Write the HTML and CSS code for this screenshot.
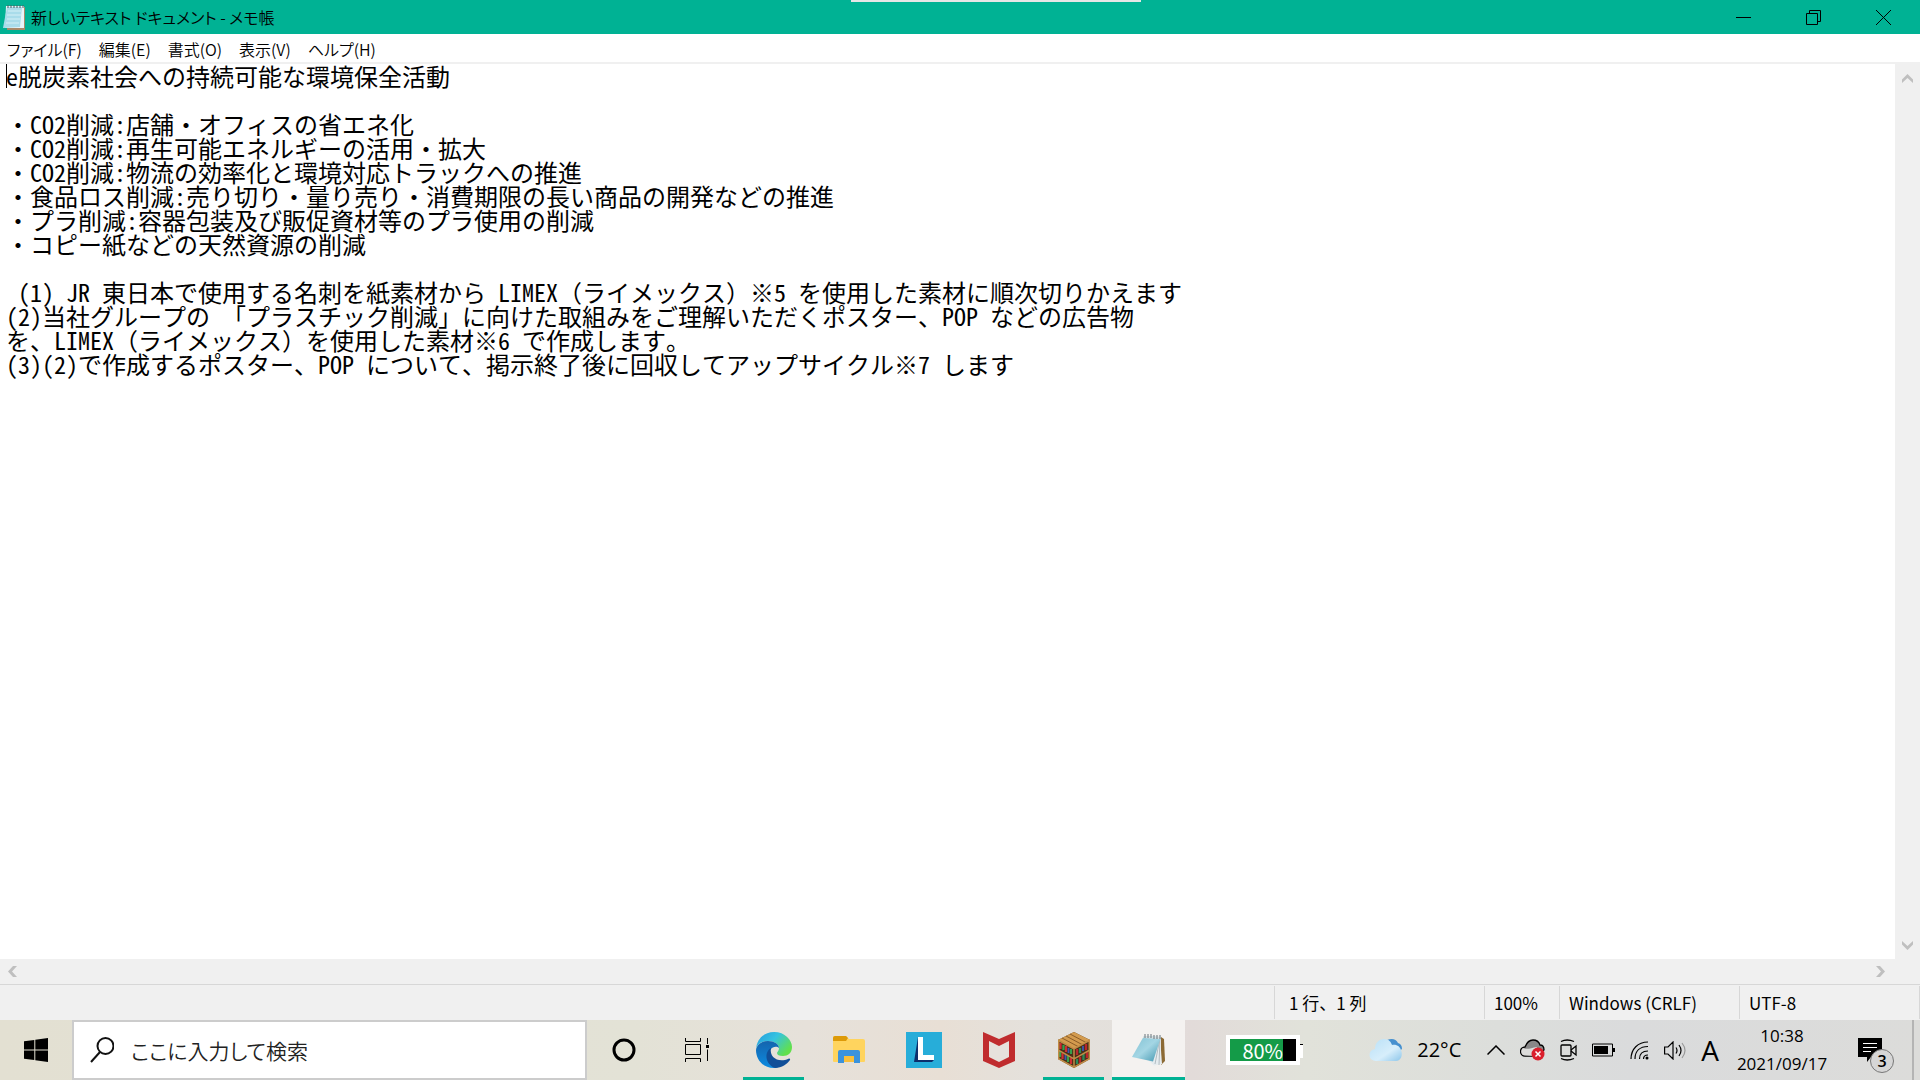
FILE: index.html
```html
<!DOCTYPE html>
<html lang="ja">
<head>
<meta charset="utf-8">
<title>新しいテキスト ドキュメント - メモ帳</title>
<link rel="stylesheet" href="styles.css">
</head>
<body>
<main class="window">
  <header class="titlebar">
    <svg class="app-icon" viewBox="0 0 24 26" aria-hidden="true">
      <path d="M4 3h18v23H4z" fill="#a98a6a"/>
      <path d="M3 2h18v22H2z" fill="#e8f4f8"/>
      <path d="M4 3h15L17 23 0 24z" fill="#a9dcea"/>
      <path d="M5 7h13M4 11h14M4 15h13M3 19h13" stroke="#d5f0f6" stroke-width="1"/>
      <path d="M5 1v3M8 1v3M11 1v3M14 1v3M17 1v3M20 1v3" stroke="#4c5a60" stroke-width="1"/>
    </svg>
    <h1 class="title">新しいテキスト ドキュメント - メモ帳</h1>
    <span class="grip"></span>
    <div class="window-buttons">
      <button type="button" aria-label="最小化"><svg viewBox="0 0 15 15"><path d="M0 7.5h15" /></svg></button>
      <button type="button" aria-label="元に戻す"><svg viewBox="0 0 15 15"><path d="M.5 3.5h11v11H.5zM3.5 3.500V.5h11v11h-3" /></svg></button>
      <button type="button" aria-label="閉じる"><svg viewBox="0 0 15 15"><path d="M0 0l15 15M15 0L0 15" /></svg></button>
    </div>
  </header>
  <nav class="menubar">
    <button type="button">ファイル(F)</button>
    <button type="button">編集(E)</button>
    <button type="button">書式(O)</button>
    <button type="button">表示(V)</button>
    <button type="button">ヘルプ(H)</button>
  </nav>
  <div class="editor">
    <div class="page">
      <textarea class="text" wrap="off" spellcheck="false" aria-label="本文">e脱炭素社会への持続可能な環境保全活動

・CO2削減:店舗・オフィスの省エネ化
・CO2削減:再生可能エネルギーの活用・拡大
・CO2削減:物流の効率化と環境対応トラックへの推進
・食品ロス削減:売り切り・量り売り・消費期限の長い商品の開発などの推進
・プラ削減:容器包装及び販促資材等のプラ使用の削減
・コピー紙などの天然資源の削減

 (1) JR 東日本で使用する名刺を紙素材から LIMEX（ライメックス）※5 を使用した素材に順次切りかえます
(2)当社グループの 「プラスチック削減」に向けた取組みをご理解いただくポスター、POP などの広告物
を、LIMEX（ライメックス）を使用した素材※6 で作成します。
(3)(2)で作成するポスター、POP について、掲示終了後に回収してアップサイクル※7 します</textarea>
      <span class="caret"></span>
    </div>
    <div class="scroll scroll-v">
      <button type="button" aria-label="上へ"><svg viewBox="0 0 11 9"><path d="M0 9V5.500L5.500 0 11 5.500V9L5.500 4z"/></svg></button>
      <button type="button" aria-label="下へ"><svg viewBox="0 0 11 9"><path d="M0 0v3.500L5.500 9 11 3.500V0L5.500 5z"/></svg></button>
    </div>
    <div class="scroll scroll-h">
      <button type="button" aria-label="左へ"><svg viewBox="0 0 9 11"><path d="M9 0H5L0 5.500 5 11h4L4 5.500z"/></svg></button>
      <button type="button" aria-label="右へ"><svg viewBox="0 0 9 11"><path d="M0 0h4l5 5.500L4 11H0l5-5.500z"/></svg></button>
    </div>
  </div>
  <footer class="status">
    <span class="cell cell-pos">1 行、1 列</span>
    <span class="cell cell-zoom">100%</span>
    <span class="cell cell-eol">Windows (CRLF)</span>
    <span class="cell cell-enc">UTF-8</span>
  </footer>
</main>

<section class="taskbar" aria-label="タスク バー">
  <button type="button" class="task start" aria-label="スタート">
    <svg width="24" height="24" viewBox="0 0 24 24"><path d="M0 3.300L10.300 2v9.400H0zM11.300 1.800L24 0v11.400H11.300zM0 12.400h10.300V22L0 20.700zM11.300 12.400H24V24l-12.700-1.800z"/></svg>
  </button>
  <label class="search">
    <svg width="24" height="26" viewBox="0 0 24 26" fill="none" stroke="#111" stroke-width="2"><circle cx="15.500" cy="9" r="8"/><path d="M10 15L1 25"/></svg>
    <input type="text" placeholder="ここに入力して検索" aria-label="検索">
  </label>
  <button type="button" class="task" aria-label="Cortana">
    <svg width="24" height="24" viewBox="0 0 24 24" fill="none" stroke="#000" stroke-width="3"><circle cx="12" cy="12" r="10"/></svg>
  </button>
  <button type="button" class="task" aria-label="タスク ビュー">
    <svg width="24" height="24" viewBox="0 0 24 24" fill="none" stroke="#000"><path d="M.5 0v3.500h15V0M.5 6.500h15v10H.5zM.5 24v-3.500h15V24M22.500 0v6M22.500 11.500V23"/><path d="M21 7h3v3h-3z" fill="#000" stroke="none"/></svg>
  </button>
  <div class="apps">
    <button type="button" class="task running" aria-label="Microsoft Edge">
      <svg width="36" height="36" viewBox="0 0 36 36">
        <defs>
          <linearGradient id="edge-top" x1="0" y1="0" x2="1" y2=".6"><stop offset="0" stop-color="#249ade"/><stop offset=".5" stop-color="#35c3e0"/><stop offset="1" stop-color="#62e04c"/></linearGradient>
          <linearGradient id="edge-left" x1="0" y1="0" x2="0" y2="1"><stop offset="0" stop-color="#1464ad"/><stop offset="1" stop-color="#0d8be0"/></linearGradient>
        </defs>
        <path d="M0 17C1 7 8 0 18 0c11 0 18 8 18 15 0 6-4 9-9 9-4 0-6-1-6-3 0-1 2-2 2-5 0-4-5-7-11-7C6 9 1 12 0 17z" fill="url(#edge-top)"/>
        <path d="M0 18C1 12 6 9 12 9c6 0 11 3 11 7-2-2-6-2-9 2-4 6 0 14 8 17.500C9 38 0 29 0 18z" fill="url(#edge-left)"/>
        <path d="M15 16c-7 4-6 16 4 20 7 0 12-4 15-8 .5-1-.3-2-1.500-1.300C23 31 13 26 15 16z" fill="#114f98"/>
      </svg>
    </button>
    <button type="button" class="task" aria-label="エクスプローラー">
      <svg width="32" height="28" viewBox="0 0 32 28"><path d="M0 2q0-2 2-2h11l3 3h14q2 0 2 2v20q0 1-1 1H1q-1 0-1-1z" fill="#ffd45e"/><path d="M0 2q0-2 2-2h11l2 2-2 3H0z" fill="#dd9a08"/><path d="M5 27V16q0-2 2-2h18q2 0 2 2v11h-6v-7H11v7z" fill="#3b93dd"/><path d="M11 20h10v6H11z" fill="#f9bf3b"/></svg>
    </button>
    <button type="button" class="task" aria-label="Lenovo">
      <svg width="36" height="36" viewBox="0 0 36 36"><path d="M0 0h36v36H0z" fill="#27add9"/><path d="M12 5L8 30h18l2-2-16-1z" fill="#0c2f6c"/><path d="M12 5h5v18h11v5H12z" fill="#fff"/></svg>
    </button>
    <button type="button" class="task" aria-label="McAfee">
      <svg width="32" height="36" viewBox="0 0 32 36"><path d="M0 0l16 7L32 0v29l-16 7-16-7z" fill="#c02c2e"/><path d="M6 9l10 5 10-5v16l-10 5-10-5z" fill="#e6e1dc"/></svg>
    </button>
    <button type="button" class="task running" aria-label="Minecraft">
      <svg width="32" height="36" viewBox="0 0 32 36">
        <path d="M16 0l16 8v19l-16 9L0 27V8z" fill="#4a3018"/>
        <path d="M16 0l16 8-16 9L0 8z" fill="#d39b4e"/>
        <path d="M12 2l16 8.500M8 4l16 8.500M4 6l16 8.500" stroke="#8a5c28" stroke-width="1"/>
        <path d="M2.500 11v6M8 14v6M4.500 21v6M13 26v6" stroke="#cf2d32" stroke-width="2.200"/>
        <path d="M5.500 13v5M13 17v5M2 19v6M10 24v6" stroke="#35a04c" stroke-width="2.200"/>
        <path d="M19 17v6M28 12v6M22 25v6M29 20v6" stroke="#b8262c" stroke-width="2.200"/>
        <path d="M22 16v5M19 27v5M25.500 22v6" stroke="#2b8a5a" stroke-width="2.200"/>
        <path d="M10.500 16v5M25 14v5M7.500 22v6" stroke="#3c56b0" stroke-width="1.800"/>
        <path d="M.7 8.500l15.300 8.500 15.300-8.500v18.200L16 35.200.7 26.700zM0 18l16 9 16-9M16 17v18" fill="none" stroke="#c08c46" stroke-width="1.500"/>
      </svg>
    </button>
    <button type="button" class="task running active" aria-label="メモ帳">
      <svg width="34" height="32" viewBox="0 0 34 32">
        <defs><linearGradient id="pad" x1="0" y1="0" x2="1" y2="1"><stop offset="0" stop-color="#7fc0d3"/><stop offset=".5" stop-color="#a4d6e4"/><stop offset="1" stop-color="#3d93ad"/></linearGradient></defs>
        <path d="M29 3l3 2 1 22-4 4z" fill="#8c6a34"/>
        <path d="M28 3l2 27-8 1.500L17 27z" fill="#e6ecef"/>
        <path d="M28 4l-5 26M28 4l-1 27" stroke="#a3afb5" stroke-width=".8"/>
        <path d="M12 2l17 1-8 24.500L0 23z" fill="url(#pad)"/>
        <path d="M12 2l17 1-1 2-17-1z" fill="#d9dfe1"/>
        <path d="M13 0v4M16 0v4M19 0v4M22 1v4M25 1v4M28 1v4" stroke="#69747a" stroke-width="1"/>
      </svg>
    </button>
  </div>
  <div class="meter" role="img" aria-label="バッテリー残量"><span class="meter-text">80%</span></div>
  <button type="button" class="weather">
    <svg width="34" height="24" viewBox="0 0 34 24">
      <defs><linearGradient id="sky" x1="0" y1="0" x2="1" y2="1"><stop offset="0" stop-color="#b9e0f7"/><stop offset=".6" stop-color="#d7eefb"/><stop offset="1" stop-color="#8dc6ea"/></linearGradient></defs>
      <path d="M18 2q8-3 11 3 4 1 4 6l-4 3z" fill="#4690cf"/>
      <path d="M7 23a6 6 0 0 1-1-12C6 4 11 1 15 1c5 0 7 3 8 6 5-1 8 2 9 5 2 5 0 11-5 11z" fill="url(#sky)"/>
    </svg>
    <span>22°C</span>
  </button>
  <div class="tray">
    <button type="button" aria-label="隠れているインジケーター"><svg width="18" height="10" viewBox="0 0 18 10" fill="none" stroke="#000" stroke-width="1.500"><path d="M.5 9.500L9 1l8.500 8.500"/></svg></button>
    <button type="button" aria-label="OneDrive"><svg width="25" height="22" viewBox="0 0 25 22"><path d="M5 17a4.500 4.500 0 0 1 0-9C7 3 10 1 13 1c4 0 6 2 7 5 3 0 4 2 4 5L15 17z" fill="#888" stroke="#000" stroke-width="1.300"/><path d="M5 16.500c-4 0-5-5-2-7.500 4 2 8 0 14-1l-2 9z" fill="#dcdcda"/><circle cx="18" cy="15" r="6.500" fill="#da1f2c"/><path d="M15.500 12.500l5 5M20.500 12.500l-5 5" stroke="#fff" stroke-width="1.500"/></svg></button>
    <button type="button" aria-label="ビデオ会議"><svg width="17" height="22" viewBox="0 0 17 22" fill="none" stroke="#000" stroke-width="1.300"><rect x="1" y="6" width="10" height="11" rx="1"/><path d="M11 11l5-4v9l-5-4M1 2.500q6-3 13 0M1 19.500q6 3 13 0"/></svg></button>
    <button type="button" aria-label="電源"><svg width="23" height="14" viewBox="0 0 23 14"><path d="M.5 1h20v12H.5z" fill="none" stroke="#000"/><path d="M2 3h14v8H2zM21 5h2v4h-2z"/></svg></button>
    <button type="button" aria-label="ネットワーク"><svg width="19" height="19" viewBox="0 0 19 19" fill="none" stroke="#000" stroke-width="1.200"><path d="M1 18C1 8 8 1 18 1M5 18C5 10 10 5.500 18 5.500M9.500 18c0-5 3-8 8.500-8M13.500 18c0-2.500 1.500-4 4.500-4" /><circle cx="17" cy="17" r="1.500" fill="#000" stroke="none"/></svg></button>
    <button type="button" aria-label="音量"><svg width="22" height="19" viewBox="0 0 22 19" fill="none" stroke="#000" stroke-width="1.200"><path d="M.6 6h3.400l5-5v17l-5-5H.6zM12 6.500q2 3 0 6M15 4q4 5.500 0 11"/><path d="M18 2q6 7.500 0 15" stroke="#999"/></svg></button>
    <button type="button" class="ime">A</button>
  </div>
  <button type="button" class="clock"><span>10:38</span><span>2021/09/17</span></button>
  <button type="button" class="notice" aria-label="通知 3">
    <svg width="24" height="24" viewBox="0 0 24 24"><path d="M0 0h24v19H13l-4 5v-5H0z"/><path d="M5 5.500h14M5 9.500h14M5 13.500h8" stroke="#fff"/></svg>
    <span class="badge">3</span>
  </button>
  <button type="button" class="peek" aria-label="デスクトップの表示"></button>
</section>
</body>
</html>
```
FILE: styles.css
```css
* { box-sizing: border-box; }

body {
  margin: 0;
  min-height: 100vh;
  display: flex;
  flex-direction: column;
  background: #fff;
  color: #000;
  font-family: "Noto Sans CJK JP", sans-serif;
  font-size: 17px;
  font-feature-settings: "palt";
}

button {
  margin: 0;
  padding: 0;
  border: 0;
  background: none;
  color: inherit;
  font: inherit;
  font-feature-settings: inherit;
}

svg { display: block; flex: none; }

.window { flex: 1; display: flex; flex-direction: column; }

.titlebar {
  position: relative;
  height: 34px;
  display: flex;
  align-items: center;
  background: #00b294;
  padding: 0 2px 0 3px;
}
.app-icon { width: 24px; height: 26px; }
.title {
  flex: 1;
  margin: 0 0 0 4px;
  font-size: 16px;
  line-height: 24px;
  font-weight: 350;
}
.grip {
  position: absolute;
  top: 0;
  left: 50%;
  width: 290px;
  height: 2px;
  margin-left: -109px;
  background: #e6e6e6;
}
.window-buttons { display: flex; align-self: stretch; }
.window-buttons button {
  width: 70px;
  display: flex;
  justify-content: center;
  align-items: center;
}
.window-buttons svg { width: 15px; height: 15px; fill: none; stroke: #000; }

.menubar {
  height: 30px;
  display: flex;
  align-items: center;
  gap: 17px;
  padding: 2px 7px 0;
  border-bottom: 2px solid #f0f0f0;
  font-size: 16px;
  font-weight: 350;
}
.menubar button { line-height: 24px; }

.editor {
  flex: 1;
  display: grid;
  grid-template-columns: 1fr 25px;
  grid-template-rows: 1fr 25px;
  background: #f0f0f0;
}
.page { position: relative; display: flex; background: #fff; }
.text {
  flex: 1;
  margin: 0;
  padding: 0 0 0 6px;
  border: 0;
  outline: 0;
  resize: none;
  overflow: hidden;
  background: none;
  color: #000;
  font-family: "Noto Sans Mono CJK JP", "Noto Sans CJK JP", monospace;
  font-feature-settings: normal;
  font-size: 24px;
  line-height: 24px;
}
.caret { position: absolute; left: 6px; top: 0; width: 1px; height: 24px; background: #000; }

.scroll { display: flex; justify-content: space-between; align-items: center; }
.scroll-v { flex-direction: column; padding: 10px 0 9px; }
.scroll-h { padding: 0 10px 0 8px; }
.scroll svg { fill: #bfbfbf; }
.scroll-v svg { width: 11px; height: 9px; }
.scroll-h svg { width: 9px; height: 11px; }

.status {
  height: 36px;
  display: flex;
  justify-content: flex-end;
  padding: 1px 0;
  border-top: 1px solid #d7d7d7;
  background: #f0f0f0;
  font-size: 17px;
  font-feature-settings: normal;
}
.cell { display: flex; align-items: center; border-left: 1px solid #d7d7d7; padding-left: 9px; }
.cell-pos { width: 210px; padding-left: 14px; }
.cell-zoom { width: 75px; }
.cell-eol { width: 180px; }
.cell-enc { width: 181px; border-right: 1px solid #d7d7d7; }

.taskbar {
  height: 60px;
  display: flex;
  align-items: stretch;
  background: linear-gradient(90deg, #e3e0d2 0%, #e3e2d6 33%, #e6e1da 42%, #e8dfd5 49%, #e4e1dc 54%, #e3dfdb 60%, #e2dbd9 62%, #e1e2da 68%, #dcdedb 78%, #dadbdc 85%, #dcdcda 100%);
}
.task {
  width: 73px;
  display: flex;
  justify-content: center;
  align-items: center;
}
.start { width: 72px; }
.search {
  width: 515px;
  display: flex;
  align-items: center;
  gap: 17px;
  padding-left: 16px;
  border: 2px solid #ccc;
  background: #fff;
}
.search input {
  flex: 1;
  min-width: 0;
  padding: 0;
  border: 0;
  outline: 0;
  background: none;
  font: inherit;
  font-size: 21px;
  font-weight: 350;
  font-feature-settings: "palt";
}
.search input::placeholder { color: #222; opacity: 1; }

.apps { display: flex; gap: 2px; margin-left: 4px; }
.running {
  background: linear-gradient(#00b294, #00b294) center bottom / 61px 3px no-repeat;
}
.active { background-color: #f4f2f0; background-size: 73px 3px; }

.meter {
  position: relative;
  align-self: center;
  width: 74px;
  height: 30px;
  margin-left: 41px;
  border: 4px solid #fff;
  background: linear-gradient(90deg, #149b48 53px, #000 53px);
}
.meter::after {
  content: "";
  position: absolute;
  right: -7px;
  top: 5px;
  width: 3px;
  height: 13px;
  background: #fff;
  border-top: 1px solid #000;
}
.meter-text {
  display: block;
  width: 53px;
  text-align: right;
  color: #fff;
  font-size: 20px;
  line-height: 24px;
}

.weather { display: flex; align-items: center; gap: 14px; margin-left: auto; }
.weather, .ime, .clock, .notice { font-family: "Open Sans", sans-serif; }
.weather span { font-size: 20px; line-height: 24px; }

.tray { display: flex; align-items: center; gap: 15px; margin-left: 26px; }
.ime { font-size: 28px; line-height: 32px; }

.clock {
  width: 126px;
  display: flex;
  flex-direction: column;
  justify-content: center;
  align-items: center;
  font-size: 17px;
  line-height: 28px;
}
.notice { position: relative; width: 67px; display: flex; align-items: center; padding-left: 13px; }
.badge {
  position: absolute;
  left: 25px;
  top: 29px;
  width: 24px;
  height: 24px;
  border: 1px solid #777;
  border-radius: 50%;
  background: #d6d6d6;
  font-size: 16px;
  font-weight: 600;
  line-height: 22px;
}
.peek { width: 8px; border-left: 2px solid #b4b4b4; }
```
